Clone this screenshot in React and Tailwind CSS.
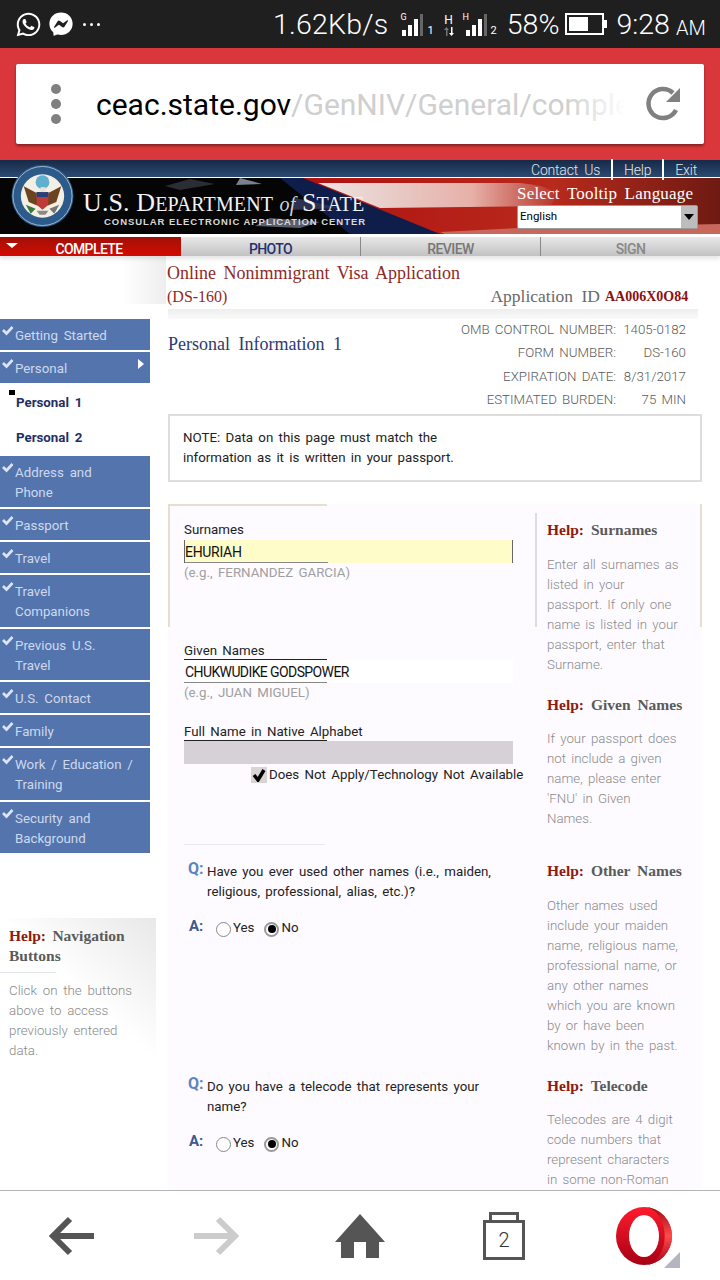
import { FaWhatsapp, FaFacebookMessenger } from 'react-icons/fa';

const navItems = [
  { label: ['Getting Started'] },
  { label: ['Personal'], arrow: true },
  { sub: true },
  { label: ['Address and', 'Phone'] },
  { label: ['Passport'] },
  { label: ['Travel'] },
  { label: ['Travel', 'Companions'], tall: true },
  { label: ['Previous U.S.', 'Travel'] },
  { label: ['U.S. Contact'] },
  { label: ['Family'] },
  { label: ['Work / Education /', 'Training'], tall: true },
  { label: ['Security and', 'Background'] },
];

function Check() {
  return (
    <svg width="15" height="12" viewBox="0 0 15 12" className="shrink-0 mt-[-1px]">
      <path d="M3 5 L6.5 8.5 L12.5 2" fill="none" stroke="#dbe5f5" strokeWidth="2.6" />
    </svg>
  );
}

function Signal({ mark, big, sub, className }) {
  return (
    <div className={`flex items-end h-[24px] text-white font-['Roboto',sans-serif] leading-none ${className}`}>
      {big && (
        <div className="flex flex-col items-center w-[12px] mr-[11px]">
          <span className="text-[12px] leading-none">H</span>
          <svg width="12" height="9" viewBox="0 0 12 9" className="mt-[1px]">
            <path d="M3 9V3H1l2.5-3L6 3H4.500v6z" fill="#777" />
            <path d="M8 0v6H6l2.500 3L11 6H9.500V0z" fill="#fff" />
          </svg>
        </div>
      )}
      <div className={big ? "relative flex items-end gap-[2px]" : "relative flex items-end gap-[2px] ml-[2px]"}>
        <span className={big ? "absolute left-[-3px] top-[-1px] text-[9px]" : "absolute left-[-2px] top-[-1px] text-[9px]"}>{mark}</span>
        <div className="w-[4px] h-[6px] bg-white" />
        <div className="w-[4px] h-[11px] bg-white" />
        <div className="w-[4px] h-[17px] bg-white" />
        <div className="w-[3px] h-[22px] bg-[#666]" />
      </div>
      <span className="text-[11px] ml-[4px]">{sub}</span>
    </div>
  );
}

function StatusBar() {
  return (
    <div className="h-[48px] bg-[#1f1f1f] flex items-center text-white font-['Roboto',sans-serif] pl-[15px]">
      <FaWhatsapp size={27} />
      <FaFacebookMessenger size={24} className="ml-[7px]" />
      <div className="flex gap-[4px] ml-[10px] w-[20px]">
        <div className="w-[3px] h-[3px] rounded-full bg-white" />
        <div className="w-[3px] h-[3px] rounded-full bg-white" />
        <div className="w-[3px] h-[3px] rounded-full bg-white" />
      </div>
      <span className="ml-[170px] mt-[3px] text-[28.500px] font-light leading-none tracking-[0.2px]">1.62Kb/s</span>
      <Signal mark="G" sub="1" className="ml-[12px]" />
      <Signal mark="H" big sub="2" className="ml-[9px]" />
      <span className="ml-[10px] mt-[3px] text-[28.500px] font-light leading-none">58%</span>
      <svg width="44" height="24" viewBox="0 0 44 24" className="ml-[6px]">
        <rect x="1" y="2" width="37" height="20" fill="none" stroke="#fff" strokeWidth="2" />
        <rect x="4" y="5" width="19" height="14" fill="#fff" />
        <rect x="39" y="8" width="3" height="8" fill="#fff" />
      </svg>
      <span className="ml-[7px] mt-[3px] text-[28.500px] font-light leading-none">9:28</span>
      <span className="ml-[6px] mt-[7px] text-[20px] font-light leading-none">AM</span>
    </div>
  );
}

function UrlBar() {
  return (
    <div className="h-[112px] bg-[#da373c] px-[16px] pt-[16px]">
      <div className="h-[80px] bg-white rounded-[2px] shadow-[0_2px_3px_rgba(0,0,0,0.4)] flex items-center font-['Roboto',sans-serif]">
        <div className="flex flex-col gap-[5px] ml-[35px]">
          <div className="w-[10px] h-[10px] rounded-full bg-[#808080]" />
          <div className="w-[10px] h-[10px] rounded-full bg-[#808080]" />
          <div className="w-[10px] h-[10px] rounded-full bg-[#808080]" />
        </div>
        <div className="relative ml-[35px] mt-[2px] w-[530px] overflow-hidden whitespace-nowrap text-[30px] leading-[36px]">
          <span className="text-black">ceac.state.gov</span>
          <span className="text-[#cfcfcf]">/GenNIV/General/complete/</span>
          <div className="absolute top-0 bottom-0 right-0 w-[60px] bg-gradient-to-r from-transparent to-white" />
        </div>
        <svg width="40" height="40" viewBox="0 0 40 40" className="ml-[18px]">
          <path d="M32 26 A14.500 14.500 0 1 1 29 9" fill="none" stroke="#808080" strokeWidth="4.500" />
          <path d="M36 4 V18 H22 Z" fill="#808080" />
        </svg>
      </div>
    </div>
  );
}

function Seal() {
  return (
    <svg width="63" height="64" viewBox="0 0 64 64" className="shrink-0">
      <circle cx="32" cy="32" r="31.500" fill="#2c5a8a" />
      <circle cx="32" cy="32" r="30" fill="none" stroke="#9db7c9" strokeWidth="1" />
      <circle cx="32" cy="32" r="22" fill="#f3efe4" />
      <circle cx="32" cy="18" r="7" fill="#5fb0d0" />
      <path d="M13 22 L26 29 L27 42 L18 38 Z" fill="#6d4420" />
      <path d="M51 22 L38 29 L37 42 L46 38 Z" fill="#6d4420" />
      <path d="M26 28 H38 V41 L32 46 L26 41 Z" fill="#c03a3a" />
      <path d="M26 28 H38 V33 H26 Z" fill="#27407a" />
      <path d="M30 23 h5 v5 h-5 z" fill="#e9e2cf" />
      <path d="M15 41 L25 45 L20 50 Z" fill="#3a7a3a" />
      <path d="M49 41 L39 45 L44 50 Z" fill="#777" />
      <path d="M26 47 H38 L35 51 H29 Z" fill="#8a8a8a" />
    </svg>
  );
}

function BannerArt() {
  return (
    <svg className="absolute inset-0" width="720" height="56" viewBox="0 0 720 56" preserveAspectRatio="none">
      <defs>
        <linearGradient id="redGrad" x1="0" x2="1" y1="0" y2="0">
          <stop offset="0" stopColor="#b01210" />
          <stop offset="0.6" stopColor="#b82a1c" />
          <stop offset="1" stopColor="#6e1a12" />
        </linearGradient>
        <linearGradient id="whiteGrad" x1="0" x2="1" y1="0" y2="0">
          <stop offset="0" stopColor="#ece4e2" />
          <stop offset="0.65" stopColor="#e6b0a8" />
          <stop offset="1" stopColor="#b8352a" />
        </linearGradient>
      </defs>
      <rect width="720" height="56" fill="#050505" />
      <path d="M280 0 L390 0 L510 56 L350 56 Z" fill="#0f1d4a" />
      <path d="M303 0 H720 V56 H440 Z" fill="url(#redGrad)" />
      <path d="M318 5 L520 5 Q570 10 550 28 L380 30 Z" fill="url(#whiteGrad)" />
      <path d="M440 54 L520 50 L720 46 V56 H445 Z" fill="#c8685c" />
      <path d="M240 0 L262 6 L236 7 Z" fill="#7a808c" />
      <path d="M190 1 L215 6 L180 12 L165 8 Z" fill="#2a2d33" />
      <path d="M270 40 L320 44 L300 50 L255 48 Z" fill="#5a5f70" />
      <path d="M295 20 L340 30 L290 32 Z" fill="#2c3152" />
    </svg>
  );
}

function Banner() {
  return (
    <div className="relative h-[77px] bg-black">
      <div className="h-[17px] bg-gradient-to-b from-[#172a48] to-[#2a4a72] flex justify-end items-end pr-[23px] text-[#e6e6e6] font-['Roboto',sans-serif] text-[14px] font-light leading-[14px] [word-spacing:3px] tracking-[-0.2px]">
        <span>Contact Us</span>
        <span className="w-[2px] h-[21px] bg-white mx-[11px] relative z-10 self-start mt-[-1px]" />
        <span>Help</span>
        <span className="w-[2px] h-[21px] bg-white mx-[11px] relative z-10 self-start mt-[-1px]" />
        <span>Exit</span>
      </div>
      <div className="h-[1px] bg-white relative" />
      <div className="relative h-[56px]">
        <BannerArt />
        <div className="relative flex h-full">
          <div className="mt-[-14px] ml-[11px] relative z-10">
            <Seal />
          </div>
          <div className="ml-[9px] mt-[10px] w-[300px]">
            <div className="font-['Liberation_Serif',serif] text-[#f2f3f5] text-[26px] leading-[30px] whitespace-nowrap tracking-[0.1px]">
              U.S. D<span className="text-[20px]">EPARTMENT</span> <i className="text-[20px] text-[#cfd3da]">of</i> S<span className="text-[20px]">TATE</span>
            </div>
            <div className="font-['Liberation_Sans',sans-serif] font-bold text-[#d8d8d8] text-[9.500px] tracking-[0.95px] leading-[12px] mt-[-3px] ml-[21px] whitespace-nowrap">
              CONSULAR ELECTRONIC APPLICATION CENTER
            </div>
          </div>
          <div className="ml-auto mr-[21px] w-[182px]">
            <div className="font-['Liberation_Serif',serif] text-white text-[17px] leading-[20px] mt-[6px] whitespace-nowrap [word-spacing:3px] tracking-[0.2px]">
              Select Tooltip Language
            </div>
            <div className="h-[24px] w-[181px] bg-white rounded-[2px] mt-[1px] flex items-center justify-between text-black text-[11.500px] font-['Roboto',sans-serif] pl-[2px] border border-[#999]">
              English
              <div className="w-[16px] h-[22px] bg-[#bdbdbd] flex items-center justify-center">
                <div className="w-0 h-0 border-l-[5px] border-r-[5px] border-t-[6px] border-l-transparent border-r-transparent border-t-black" />
              </div>
            </div>
          </div>
        </div>
      </div>
      <div className="h-[3px] bg-white" />
    </div>
  );
}

function Tabs() {
  const other = "w-[180px] h-full border-r border-[#888] bg-gradient-to-b from-[#e8e8e8] to-[#c2c2c2] flex items-end justify-center";
  return (
    <div className="relative h-[19px] flex font-['Roboto',sans-serif] font-medium text-[14px] leading-[14px] tracking-[-0.6px] shadow-[0_3px_4px_rgba(0,0,0,0.1)]">
      <div className="w-[181px] h-full bg-gradient-to-b from-[#a01008] to-[#d40a00] text-white flex items-end justify-center relative">
        <div className="absolute left-[6px] top-[6px] w-0 h-0 border-l-[6px] border-r-[6px] border-t-[5px] border-l-transparent border-r-transparent border-t-white" />
        <span className="ml-[-3px]">COMPLETE</span>
      </div>
      <div className={other}><span className="text-[#22306e]">PHOTO</span></div>
      <div className={other}><span className="text-[#777]">REVIEW</span></div>
      <div className="flex-1 h-full bg-gradient-to-b from-[#e8e8e8] to-[#c2c2c2] flex items-end justify-center"><span className="text-[#888]">SIGN</span></div>
    </div>
  );
}

function Sidebar() {
  return (
    <div className="w-[168px] shrink-0 font-['Roboto',sans-serif] text-[13.300px] [word-spacing:2.500px]">
      <div className="ml-[122px] w-[44px] h-[48px] bg-gradient-to-r from-white to-[#eeeeee]" />
      <div className="w-[150px] mt-[15px] flex flex-col gap-[2px]">
        {navItems.map((item, idx) =>
          item.sub ? (
            <div key={idx} className="h-[69px] relative font-bold text-[#1f2f66]">
              <div className="absolute left-[9px] top-[5px] w-[6px] h-[5px] bg-black" />
              <div className="pl-[16px] pt-[8px] leading-[20px]">Personal 1</div>
              <div className="pl-[16px] pt-[15px] leading-[20px]">Personal 2</div>
            </div>
          ) : (
            <div key={idx} className={item.tall ? "bg-[#5474ad] text-[#cdd9ee] flex items-start pt-[7px] pb-[5px] leading-[20px]" : "bg-[#5474ad] text-[#cdd9ee] flex items-start pt-[7px] pb-[4px] leading-[20px]"}>
              <Check />
              <div>
                {item.label.map((l) => (
                  <div key={l}>{l}</div>
                ))}
              </div>
              {item.arrow && (
                <div className="ml-auto mr-[6px] w-0 h-0 border-t-[5px] border-b-[5px] border-l-[6px] border-t-transparent border-b-transparent border-l-white" />
              )}
            </div>
          )
        )}
      </div>
      <div className="mt-[65px] w-[156px] h-[142px] bg-gradient-to-bl from-[#e8e8e8] via-white to-white pl-[9px] pt-[8px] leading-[20px]">
        <div className="font-['Liberation_Serif',serif] font-bold text-[15.500px] text-[#5a5a5a] leading-[20px]">
          <span className="text-[#8f1a0e]">Help:</span> Navigation Buttons
        </div>
        <div className="h-[1px] w-[56px] bg-[#e5e5e5] ml-[-9px] mt-[6px]" />
        <div className="mt-[8px] text-[#8a8a8a] font-light w-[135px]">Click on the buttons above to access previously entered data.</div>
      </div>
    </div>
  );
}

function HelpBlock({ title, className, paraClass, lines }) {
  return (
    <div className={className}>
      <div className="font-['Liberation_Serif',serif] font-bold text-[15.500px] text-[#5a5a5a] leading-[20px] [word-spacing:3px]">
        <span className="text-[#8f1a0e]">Help:</span> {title}
      </div>
      <div className={`${paraClass} text-[#8a8a8a] font-light leading-[20px] whitespace-nowrap`}>
        {lines.map((l) => (
          <div key={l}>{l}</div>
        ))}
      </div>
    </div>
  );
}

function Radio({ label, checked }) {
  return (
    <div className="flex items-center">
      <div className={checked ? "w-[15px] h-[15px] rounded-full border-2 border-[#999] bg-white flex items-center justify-center" : "w-[15px] h-[15px] rounded-full border border-[#888] bg-white"}>
        {checked && <div className="w-[8px] h-[8px] rounded-full bg-black" />}
      </div>
      <span className="ml-[2px] text-[#222] mt-[-3px]">{label}</span>
    </div>
  );
}

function Question({ className, lines }) {
  return (
    <div className={className}>
      <div className="flex leading-[20px]">
        <span className="w-[23px] pl-[4px] font-bold text-[#5b85c0] text-[16px] mt-[-3px]">Q:</span>
        <div className="text-[#222]">
          {lines.map((l) => (
            <div key={l}>{l}</div>
          ))}
        </div>
      </div>
      <div className="flex mt-[17px]">
        <span className="w-[32px] pl-[5px] font-bold text-[#3d5a8c] text-[15px] leading-[20px] mt-[-3px]">A:</span>
        <div className="flex gap-[10px] mt-[2px]">
          <Radio label="Yes" />
          <Radio label="No" checked />
        </div>
      </div>
    </div>
  );
}

function FormPanel() {
  const label = "text-[#222] leading-[18px] h-[18px] border-b border-[#222] w-[143px] whitespace-nowrap";
  return (
    <div className="relative mt-[22px] w-[534px] bg-[#fdfbff] flex font-['Roboto',sans-serif] text-[13.300px] [word-spacing:2px] h-[686px]">
      <div className="absolute left-0 top-0 w-[159px] h-[2px] bg-[#e6dfcf]" />
      <div className="absolute left-0 top-0 w-[2px] h-[123px] bg-[#e6dfcf]" />
      <div className="absolute left-[367px] top-[9px] w-[2px] h-[114px] bg-[#dddddd]" />
      <div className="absolute left-[532px] top-0 w-[2px] h-[123px] bg-[#e6dfcf]" />
      <div className="w-[367px] shrink-0 pl-[16px] pt-[17px]">
        <div className="leading-[18px] text-[#222]">Surnames</div>
        <div className="w-[329px] h-[23px] mt-[1px] bg-[#fefcc8] border-l border-r border-[#666] text-[14px] text-[#111] leading-[24px] tracking-[-0.3px] relative">
          EHURIAH
          <div className="absolute left-0 bottom-0 w-[143px] h-[1px] bg-[#888]" />
        </div>
        <div className="text-[#a0a0a0] leading-[20px]">(e.g., FERNANDEZ GARCIA)</div>
        <div className={`${label} mt-[59px]`}>Given Names</div>
        <div className="w-[329px] h-[23px] bg-white text-[14px] text-[#111] pl-[1px] leading-[24px] tracking-[-0.6px] [word-spacing:0px] relative">
          CHUKWUDIKE GODSPOWER
          <div className="absolute left-0 bottom-0 w-[143px] h-[1px] bg-[#888]" />
        </div>
        <div className="text-[#a0a0a0] leading-[20px]">(e.g., JUAN MIGUEL)</div>
        <div className={`${label} mt-[20px]`}>Full Name in Native Alphabet</div>
        <div className="w-[329px] h-[23px] bg-[#d5d1d6]" />
        <div className="flex items-center mt-[1px] ml-[67px] text-[#222] whitespace-nowrap leading-[20px]">
          <div className="w-[16px] h-[16px] bg-[#d8d4d4] flex items-center justify-center shrink-0">
            <svg width="14" height="14" viewBox="0 0 14 14">
              <path d="M2 7 L6 12 L12 2" fill="none" stroke="#000" strokeWidth="3.500" />
            </svg>
          </div>
          <span className="ml-[2px]">Does Not Apply/Technology Not Available</span>
        </div>
        <div className="h-[1px] w-[141px] bg-[#e8e8e8] mt-[59px]" />
        <Question className="mt-[17px]" lines={['Have you ever used other names (i.e., maiden,', 'religious, professional, alias, etc.)?']} />
        <Question className="mt-[139px]" lines={['Do you have a telecode that represents your', 'name?']} />
      </div>
      <div className="flex-1 pl-[12px] pt-[16px] pr-[16px]">
        <HelpBlock title="Surnames" paraClass="mt-[15px]" lines={['Enter all surnames as', 'listed in your', 'passport. If only one', 'name is listed in your', 'passport, enter that', 'Surname.']} />
        <HelpBlock title="Given Names" className="mt-[20px]" paraClass="mt-[14px]" lines={['If your passport does', 'not include a given', 'name, please enter', "'FNU' in Given", 'Names.']} />
        <HelpBlock title="Other Names" className="mt-[32px]" paraClass="mt-[15px]" lines={['Other names used', 'include your maiden', 'name, religious name,', 'professional name, or', 'any other names', 'which you are known', 'by or have been', 'known by in the past.']} />
        <HelpBlock title="Telecode" className="mt-[20px]" paraClass="mt-[14px]" lines={['Telecodes are 4 digit', 'code numbers that', 'represent characters', 'in some non-Roman']} />
      </div>
    </div>
  );
}

function Main() {
  const rows = [
    ['OMB CONTROL NUMBER:', '1405-0182'],
    ['FORM NUMBER:', 'DS-160'],
    ['EXPIRATION DATE:', '8/31/2017'],
    ['ESTIMATED BURDEN:', '75 MIN'],
  ];
  return (
    <div className="flex-1 min-w-0">
      <div className="pt-[6px] font-['Liberation_Serif',serif] text-[18px] text-[#8f2a1f] leading-[23px] [word-spacing:3px] whitespace-nowrap ml-[-1px]">
        Online Nonimmigrant Visa Application
      </div>
      <div className="flex items-center font-['Liberation_Serif',serif] leading-[23px] whitespace-nowrap">
        <span className="text-[16px] text-[#8f2a1f] ml-[-1px]">(DS-160)</span>
        <span className="ml-[263px] text-[17.500px] text-[#6a6a6a] [word-spacing:4px]">Application ID</span>
        <span className="ml-[5px] font-bold text-[14px] text-[#8b1010]">AA006X0O84</span>
      </div>
      <div className="h-[10px] w-[530px] mt-[1px] bg-gradient-to-b from-[#eeeeee] to-[#fafafa]" />
      <div className="flex font-['Roboto',sans-serif] text-[13.300px] [word-spacing:2px] mt-[-1px]">
        <div className="font-['Liberation_Serif',serif] text-[18px] text-[#2c3a6e] leading-[23px] mt-[15px] whitespace-nowrap [word-spacing:4px]">Personal Information 1</div>
        <div className="ml-auto mr-[34px] text-[#5a5a5a] font-light">
          {rows.map(([a, b]) => (
            <div key={a} className="flex justify-end h-[23.500px] items-center whitespace-nowrap">
              <span>{a}</span>
              <span className="w-[70px] text-right">{b}</span>
            </div>
          ))}
        </div>
      </div>
      <div className="mt-[2px] w-[534px] h-[68px] border-2 border-[#dddddd] px-[13px] pt-[12px] font-['Roboto',sans-serif] text-[13.300px] leading-[20px] text-[#222] [word-spacing:2px]">
        <div>NOTE: Data on this page must match the</div>
        <div>information as it is written in your passport.</div>
      </div>
      <FormPanel />
    </div>
  );
}

function BottomBar() {
  return (
    <div className="h-[90px] bg-white border-t border-[#b5b5b5] grid grid-cols-5 items-center justify-items-center font-['Roboto',sans-serif]">
      <svg width="48" height="44" viewBox="0 0 48 44">
        <path d="M22 5 L5 22 L22 39 M6 22 H46" fill="none" stroke="#555" strokeWidth="6" />
      </svg>
      <svg width="48" height="44" viewBox="0 0 48 44">
        <path d="M26 5 L43 22 L26 39 M42 22 H2" fill="none" stroke="#ccc" strokeWidth="6" />
      </svg>
      <svg width="52" height="46" viewBox="0 0 52 46">
        <path d="M26 1 L51 29 H45 V45 H32 V29 H20 V45 H7 V29 H1 Z" fill="#555" />
      </svg>
      <div className="flex flex-col items-center">
        <div className="w-[30px] h-[8px] border-[3px] border-b-0 border-[#555]" />
        <div className="w-[42px] h-[40px] border-[3px] border-[#555] flex items-center justify-center text-[#333] text-[20px] font-light">2</div>
      </div>
      <div className="relative w-[64px] h-[60px]">
        <svg width="56" height="60" viewBox="0 0 56 60" className="absolute left-0 top-0">
          <defs>
            <linearGradient id="opera" x1="0" x2="0" y1="0" y2="1">
              <stop offset="0" stopColor="#ff1b2d" />
              <stop offset="1" stopColor="#a70014" />
            </linearGradient>
            <linearGradient id="operaRight" x1="0" x2="0" y1="0" y2="1">
              <stop offset="0" stopColor="#9c0a12" />
              <stop offset="0.5" stopColor="#ff4b4b" />
              <stop offset="1" stopColor="#a70014" />
            </linearGradient>
          </defs>
          <ellipse cx="28" cy="30" rx="28" ry="29" fill="url(#opera)" />
          <path d="M28 1 A28 29 0 0 1 28 59 A15 21 0 0 0 28 1 Z" fill="url(#operaRight)" />
          <ellipse cx="28" cy="30" rx="15" ry="21" fill="#fff" />
        </svg>
        <div className="absolute right-0 bottom-[-2px] w-0 h-0 border-l-[16px] border-l-transparent border-b-[16px] border-b-[#b3b6c0]" />
      </div>
    </div>
  );
}

export default function App() {
  return (
    <div className="w-[720px] h-[1280px] flex flex-col overflow-hidden bg-white">
      <StatusBar />
      <UrlBar />
      <Banner />
      <Tabs />
      <div className="flex-1 min-h-0 flex overflow-hidden">
        <Sidebar />
        <Main />
      </div>
      <BottomBar />
    </div>
  );
}
